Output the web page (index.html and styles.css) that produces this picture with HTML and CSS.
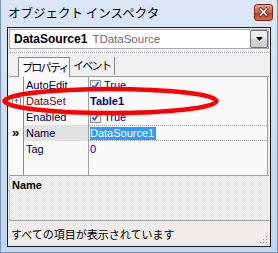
FILE: index.html
```html
<!DOCTYPE html>
<html lang="ja">
<head>
    <meta charset="UTF-8">
    <title>オブジェクト インスペクタ</title>
    <link rel="stylesheet" href="styles.css">
</head>
<body>
<div class="window">
    <!-- Title bar -->
    <div class="titlebar">
        <span class="title">オブジェクト インスペクタ</span>
        <span class="close-btn">
            <svg width="19" height="17" viewBox="0 0 19 17">
                <path d="M6.5 5 L12.5 11 M12.5 5 L6.5 11" stroke="#6b1d0c" stroke-width="3.2" stroke-linecap="square"/>
                <path d="M6.5 5 L12.5 11 M12.5 5 L6.5 11" stroke="#fff" stroke-width="1.6" stroke-linecap="square"/>
            </svg>
        </span>
    </div>

    <div class="client">
        <!-- Component selector -->
        <div class="combo">
            <span class="combo-name">DataSource1</span>
            <span class="combo-type">TDataSource</span>
            <span class="combo-drop">
                <svg width="7" height="4" viewBox="0 0 7 4"><path d="M0 0 H7 L3.5 4 Z" fill="#000"/></svg>
            </span>
        </div>

        <!-- Tabs -->
        <div class="tabs">
            <span class="tab active">プロパティ</span>
            <span class="tab">イベント</span>
        </div>

        <!-- Property grid -->
        <div class="grid">
            <div class="row">
                <div class="gutter"></div>
                <div class="name">AutoEdit</div>
                <div class="value"><span class="check"><svg width="11" height="11" viewBox="0 0 11 11"><path d="M2.5 5.5 L4.5 8 L8.5 2" stroke="#3050b8" stroke-width="1.6" fill="none"/></svg></span>True</div>
            </div>
            <div class="row">
                <div class="gutter"><span class="expand">+</span></div>
                <div class="name ref">DataSet</div>
                <div class="value strong">Table1</div>
            </div>
            <div class="row">
                <div class="gutter"></div>
                <div class="name">Enabled</div>
                <div class="value"><span class="check"><svg width="11" height="11" viewBox="0 0 11 11"><path d="M2.5 5.5 L4.5 8 L8.5 2" stroke="#3050b8" stroke-width="1.6" fill="none"/></svg></span>True</div>
            </div>
            <div class="row selected">
                <div class="gutter"><span class="marker">&raquo;</span></div>
                <div class="name">Name</div>
                <div class="value"><span class="edit">DataSource1</span></div>
            </div>
            <div class="row">
                <div class="gutter"></div>
                <div class="name">Tag</div>
                <div class="value">0</div>
            </div>
            <div class="row filler">
                <div class="gutter"></div>
                <div class="name"></div>
                <div class="value"></div>
            </div>
        </div>

        <!-- Description -->
        <div class="desc">Name</div>

        <!-- Status bar -->
        <div class="status">
            <span>すべての項目が表示されています</span>
            <svg class="grip" width="8" height="8" viewBox="0 0 8 8">
                <rect x="6" y="0" width="1" height="1" fill="#a0a0a0"/>
                <rect x="3" y="3" width="1" height="1" fill="#a0a0a0"/>
                <rect x="6" y="3" width="1" height="1" fill="#a0a0a0"/>
                <rect x="0" y="6" width="1" height="1" fill="#a0a0a0"/>
                <rect x="3" y="6" width="1" height="1" fill="#a0a0a0"/>
                <rect x="6" y="6" width="1" height="1" fill="#a0a0a0"/>
            </svg>
        </div>
    </div>

    <!-- Red annotation ring -->
    <svg class="mark" width="278" height="253" viewBox="0 0 278 253">
        <ellipse cx="109.5" cy="101" rx="106" ry="12" fill="none" stroke="#f00" stroke-width="4.5"/>
    </svg>
</div>
</body>
</html>
```

FILE: styles.css
```css
/* Reset */
* {
    margin: 0;
    padding: 0;
    box-sizing: border-box;
}

body {
    background: #fff;
    font-family: "Liberation Sans", Arial, sans-serif;
}

/* Window frame */
.window {
    position: relative;
    width: 278px;
    height: 253px;
    padding: 0 6px 6px 6px;
    background: linear-gradient(to bottom, #dbe7f6, #c9dbf1 60%, #c3d6ee);
    border: 1px solid #7b93b5;
    border-top: none;
}

.titlebar {
    height: 27px;
    display: flex;
    align-items: center;
    justify-content: space-between;
    padding-left: 1px;
}

.title {
    font-family: "Noto Sans CJK JP", sans-serif;
    font-size: 12.5px;
    color: #000;
    margin-top: -2px;
}

.close-btn {
    display: flex;
    width: 19px;
    height: 17px;
    margin-right: -2px;
    margin-top: -3px;
    border: 1px solid #7a2b17;
    border-radius: 3px;
    background: linear-gradient(to bottom, #eba58d, #d5603f 50%, #c23a1a 51%, #d86a45);
    align-items: center;
    justify-content: center;
}

.close-btn svg {
    display: block;
    margin: -1px;
}

/* Client area */
.client {
    height: 220px;
    border: 1px solid #1c1c1c;
    background: #f0f0f0;
    display: flex;
    flex-direction: column;
}

/* Selector */
.combo {
    height: 20px;
    margin: 1px 1px 0 1px;
    border: 1px solid #abadb3;
    background: #fff;
    display: flex;
    align-items: center;
    padding-left: 4px;
    font-size: 12px;
}

.combo-name {
    font-weight: bold;
    color: #000;
}

.combo-type {
    color: #6d6d6d;
    margin-left: 5px;
    font-size: 11.5px;
    flex: 1;
}

.combo-drop {
    width: 18px;
    height: 18px;
    border: 1px solid #707070;
    border-radius: 2px;
    background: linear-gradient(to bottom, #f3f3f3, #e6e6e6 50%, #d7d7d7 51%, #cfcfcf);
    display: flex;
    align-items: center;
    justify-content: center;
}

/* Tabs */
.tabs {
    height: 25px;
    margin: 3px 1px 0 1px;
    border-top: 1px dotted #b4b4b4;
    border-bottom: 1px solid #a0a0a0;
    display: flex;
    align-items: flex-end;
    padding-left: 9px;
    font-family: "Noto Sans CJK JP", sans-serif;
    font-size: 11px;
}

.tab {
    width: 45px;
    height: 18px;
    padding-left: 3px;
    line-height: 17px;
    color: #000;
    border-right: 1px solid #8a8a8a;
    margin-bottom: 1px;
    white-space: nowrap;
    letter-spacing: -1.7px;
}

.tab.active {
    width: 52px;
    height: 20px;
    padding-top: 1px;
    margin-bottom: -1px;
    border: 1px solid #8a8a8a;
    border-bottom: none;
    background: #fafafa;
}

/* Property grid */
.grid {
    height: 98px;
    margin: 0 2px 0 1px;
    background: #fafafa;
    border-right: 1px solid #a0a0a0;
    display: flex;
    flex-direction: column;
    font-size: 11px;
}

.row {
    height: 16px;
    display: flex;
}

.row.filler {
    flex: 1;
    height: auto;
}

.gutter {
    width: 15px;
    border-right: 1px solid #8c8c8c;
    display: flex;
    align-items: center;
    padding-left: 3px;
}

.name {
    width: 65px;
    border-right: 1px solid #a0a0a0;
    padding-left: 2px;
    line-height: 16px;
    color: #000040;
}

.name.ref {
    color: #800000;
}

.value {
    flex: 1;
    padding-left: 1px;
    line-height: 16px;
    color: #000080;
    display: flex;
    align-items: center;
}

.value.strong {
    font-weight: bold;
}

.check {
    width: 11px;
    height: 11px;
    margin-right: 3px;
    border: 1px solid #8f8f8f;
    background: linear-gradient(135deg, #e6e6e6, #ffffff);
    display: flex;
}

.check svg {
    margin: -1px;
}

.expand {
    width: 9px;
    height: 9px;
    border: 1px solid #919191;
    background: #fff;
    font-size: 9px;
    line-height: 7px;
    text-align: center;
    color: #333;
}

.marker {
    font-weight: bold;
    font-size: 13px;
    line-height: 14px;
    color: #000;
}

.row.selected .name {
    background: #e2e2e2;
}

.row.selected .value {
    border-top: 1px dotted #a0a0a0;
    border-bottom: 1px dotted #a0a0a0;
}

.edit {
    background: #3399ff;
    color: #fff;
    line-height: 13px;
    padding-right: 1px;
    border-right: 1px solid #e07020;
}

/* Description panel */
.desc {
    height: 46px;
    margin: 0 1px;
    border-top: 1px solid #a0a0a0;
    border-bottom: 1px solid #a0a0a0;
    border-left: 1px solid #c8c8c8;
    background: repeating-conic-gradient(#e6e6e6 0 25%, #f6f6f6 0 50%) 0 0 / 2px 2px;
    font-size: 11px;
    font-weight: bold;
    padding: 3px 2px;
    color: #000;
}

/* Status bar */
.status {
    flex: 1;
    display: flex;
    align-items: center;
    justify-content: space-between;
    padding: 0 2px 0 3px;
    background: #efedeb;
    font-family: "Noto Sans CJK JP", sans-serif;
    font-size: 11px;
    color: #000;
}

.grip {
    align-self: flex-end;
    margin-bottom: 2px;
}

/* Annotation */
.mark {
    position: absolute;
    left: 0;
    top: 0;
    pointer-events: none;
}
```
